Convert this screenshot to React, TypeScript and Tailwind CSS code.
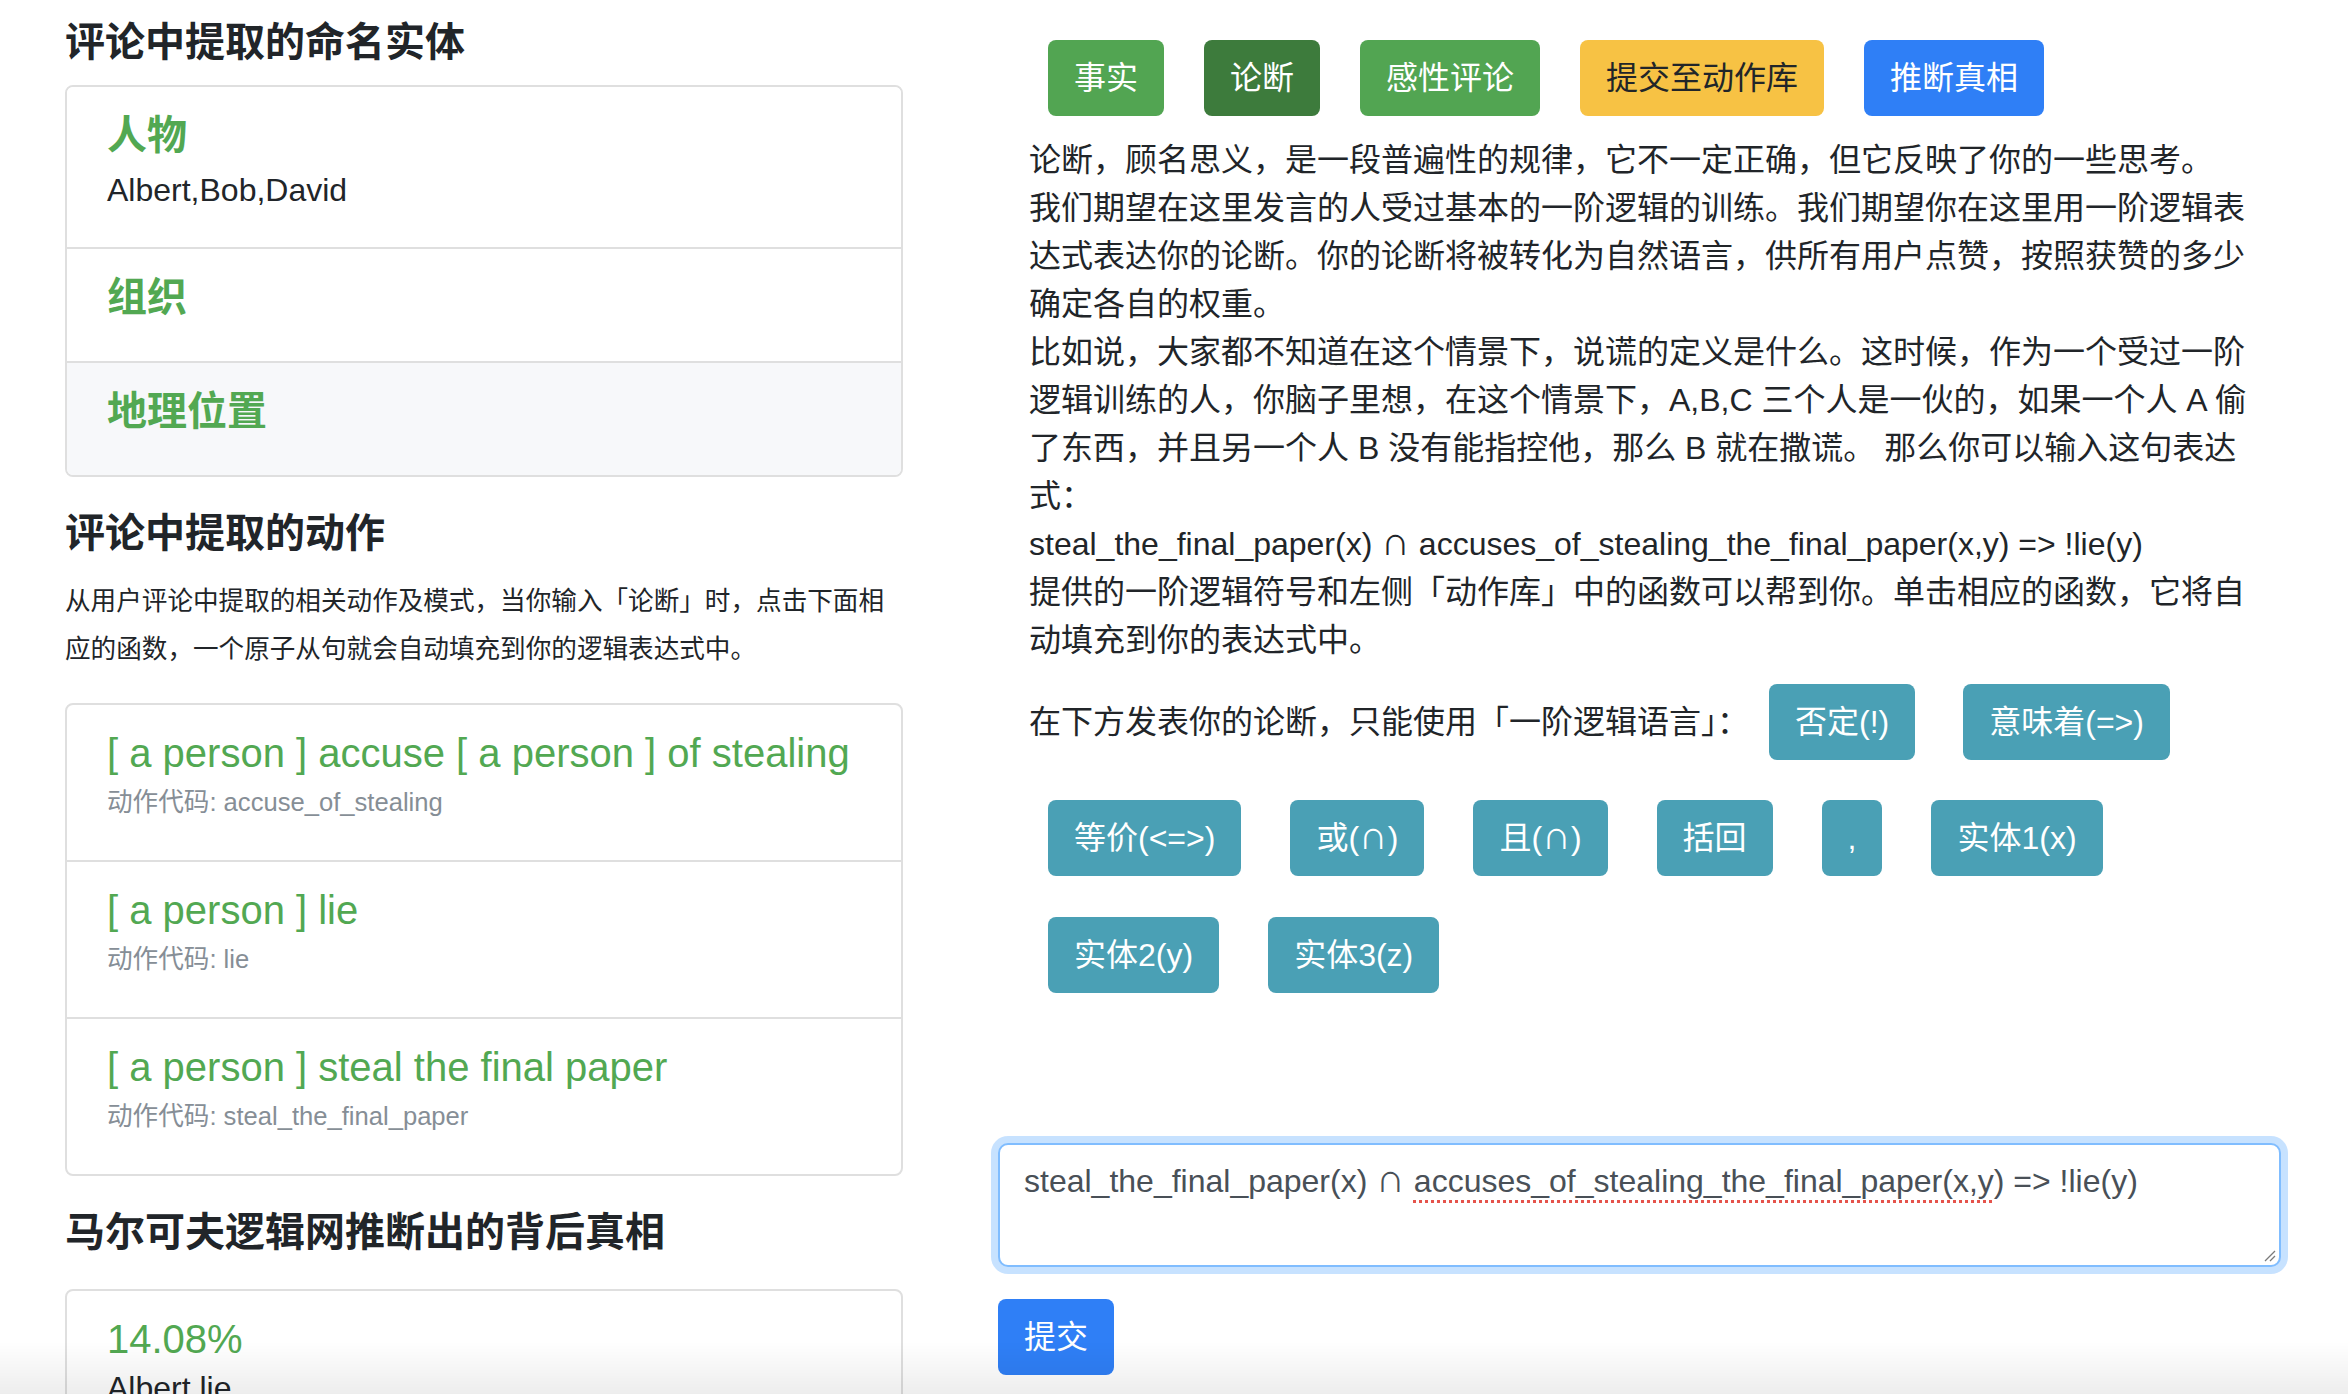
import React from "react";

const entities = [
  { title: "人物", text: "Albert,Bob,David" },
  { title: "组织", text: "" },
  { title: "地理位置", text: "" },
];

const actions = [
  { title: "[ a person ] accuse [ a person ] of stealing", code: "accuse_of_stealing" },
  { title: "[ a person ] lie", code: "lie" },
  { title: "[ a person ] steal the final paper", code: "steal_the_final_paper" },
];

const Btn = ({ children, className }: { children: React.ReactNode; className: string }) => (
  <button className={"shrink-0 rounded-lg border-2 border-transparent px-[24px] py-[10px] text-[32px] leading-[52px] whitespace-nowrap " + className}>
    {children}
  </button>
);

const Heading = ({ children, className = "" }: { children: React.ReactNode; className?: string }) => (
  <h4 className={"text-[40px] leading-[48px] font-semibold text-[#212529] " + className}>{children}</h4>
);

// the cap symbol is taller in the original than Liberation's glyph
const Cap = () => <span className="text-[1.25em] leading-[0]">∩</span>;

const App = () => {
  return (
    <div className="relative min-h-[1394px] bg-white font-['Liberation_Sans','Noto_Sans_CJK_SC',sans-serif] text-[#212529]">
      <div className="flex gap-[95px] pl-[65px]">
        {/* left column */}
        <div className="w-[838px] shrink-0 pt-[18px]">
          <Heading>评论中提取的命名实体</Heading>
          <div className="mt-[19px] overflow-hidden rounded-lg border-2 border-[#dfdfdf]">
            {entities.map((e, i) => (
              <div
                key={e.title}
                className={
                  "px-[40px] pt-[24px] pb-[24px] " +
                  (i > 0 ? "border-t-2 border-[#dfdfdf] " : "") +
                  (i === 2 ? "bg-[#f7f8fa]" : "bg-white")
                }
              >
                <h5 className="text-[40px] leading-[48px] font-semibold text-[#52a852]">{e.title}</h5>
                {e.text ? (
                  <p className="mt-[7px] mb-[9px] text-[32px] leading-[48px]">{e.text}</p>
                ) : (
                  <div className="h-[16px]" />
                )}
              </div>
            ))}
          </div>

          <Heading className="mt-[32px]">评论中提取的动作</Heading>
          <p className="mt-[20px] text-[25.6px] leading-[48px]">
            从用户评论中提取的相关动作及模式，当你输入「论断」时，点击下面相应的函数，一个原子从句就会自动填充到你的逻辑表达式中。
          </p>
          <div className="mt-[30px] overflow-hidden rounded-lg border-2 border-[#dfdfdf]">
            {actions.map((a, i) => (
              <div key={a.code} className={"px-[40px] pt-[24px] pb-[24px] " + (i > 0 ? "border-t-2 border-[#dfdfdf]" : "")}>
                <h5 className="text-[40px] leading-[48px] font-medium text-[#52a852]">{a.title}</h5>
                <p className="mt-[1px] mb-[10px] text-[25.6px] leading-[48px] text-[#868e96]">动作代码: {a.code}</p>
              </div>
            ))}
          </div>

          <Heading className="mt-[32px]">马尔可夫逻辑网推断出的背后真相</Heading>
          <div className="mt-[33px] overflow-hidden rounded-lg border-2 border-[#dfdfdf]">
            <div className="px-[40px] pt-[24px] pb-[24px]">
              <h5 className="text-[40px] leading-[48px] font-medium text-[#52a852]">14.08%</h5>
              <p className="mt-[1px] mb-[10px] text-[32px] leading-[48px]">Albert lie</p>
            </div>
          </div>
        </div>

        {/* right column */}
        <div className="w-[1283px] shrink-0 pt-[40px]">
          <div className="flex gap-[40px] pl-[50px]">
            <Btn className="bg-[#52a552] text-white">事实</Btn>
            <Btn className="bg-[#3d7b3c] text-white">论断</Btn>
            <Btn className="bg-[#52a552] text-white">感性评论</Btn>
            <Btn className="bg-[#f7c244] text-[#212529]">提交至动作库</Btn>
            <Btn className="bg-[#2f7ff6] text-white">推断真相</Btn>
          </div>

          <p className="mt-[20px] ml-[31px] w-[1232px] text-[32px] leading-[48px]">
            论断，顾名思义，是一段普遍性的规律，它不一定正确，但它反映了你的一些思考。
            <br />
            我们期望在这里发言的人受过基本的一阶逻辑的训练。我们期望你在这里用一阶逻辑表达式表达你的论断。你的论断将被转化为自然语言，供所有用户点赞，按照获赞的多少确定各自的权重。
            <br />
            比如说，大家都不知道在这个情景下，说谎的定义是什么。这时候，作为一个受过一阶逻辑训练的人，你脑子里想，在这个情景下，A,B,C 三个人是一伙的，如果一个人 A 偷了东西，并且另一个人 B 没有能指控他，那么 B 就在撒谎。 那么你可以输入这句表达式：
            <br />
            steal_the_final_paper(x) <Cap /> accuses_of_stealing_the_final_paper(x,y) =&gt; !lie(y)
            <br />
            提供的一阶逻辑符号和左侧「动作库」中的函数可以帮到你。单击相应的函数，它将自动填充到你的表达式中。
          </p>

          <div className="mt-[20px] ml-[31px] flex items-center">
            <span className="text-[32px] leading-[48px]">在下方发表你的论断，只能使用「一阶逻辑语言」：</span>
            <div className="ml-[20px] flex gap-[48px]">
              <Btn className="bg-[#4aa0b5] text-white">否定(!)</Btn>
              <Btn className="bg-[#4aa0b5] text-white">意味着(=&gt;)</Btn>
            </div>
          </div>

          <div className="mt-[40px] flex w-[1200px] flex-wrap gap-x-[49px] gap-y-[41px] pl-[50px]">
            <Btn className="bg-[#4aa0b5] text-white">等价(&lt;=&gt;)</Btn>
            <Btn className="bg-[#4aa0b5] text-white">或(<Cap />)</Btn>
            <Btn className="bg-[#4aa0b5] text-white">且(<Cap />)</Btn>
            <Btn className="bg-[#4aa0b5] text-white">括回</Btn>
            <Btn className="bg-[#4aa0b5] text-white">,</Btn>
            <Btn className="bg-[#4aa0b5] text-white">实体1(x)</Btn>
            <Btn className="bg-[#4aa0b5] text-white">实体2(y)</Btn>
            <Btn className="bg-[#4aa0b5] text-white">实体3(z)</Btn>
          </div>

          <div className="relative mt-[150px] h-[124px] rounded-[10px] border-2 border-[#80bdff] bg-white px-[24px] py-[12px] text-[32px] leading-[48px] text-[#495057] shadow-[0_0_0_7px_rgba(0,123,255,0.22)]">
            steal_the_final_paper(x) <Cap />{" "}
            <span className="underline decoration-[#e5534b] decoration-dotted decoration-[3px] underline-offset-[8px]">
              accuses_of_stealing_the_final_paper(x,y
            </span>
            ) =&gt; !lie(y)
            <svg className="absolute right-[3px] bottom-[3px]" width="14" height="14" viewBox="0 0 14 14">
              <path d="M13 3 L3 13 M13 8 L8 13" stroke="#7a7a7a" strokeWidth="1.3" />
            </svg>
          </div>

          <div className="mt-[32px]">
            <Btn className="bg-[#2f7ff6] text-white">提交</Btn>
          </div>
        </div>
      </div>

      <div className="pointer-events-none fixed inset-x-0 bottom-0 h-[52px] bg-gradient-to-b from-transparent to-black/[0.07]" />
    </div>
  );
};

export default App;
